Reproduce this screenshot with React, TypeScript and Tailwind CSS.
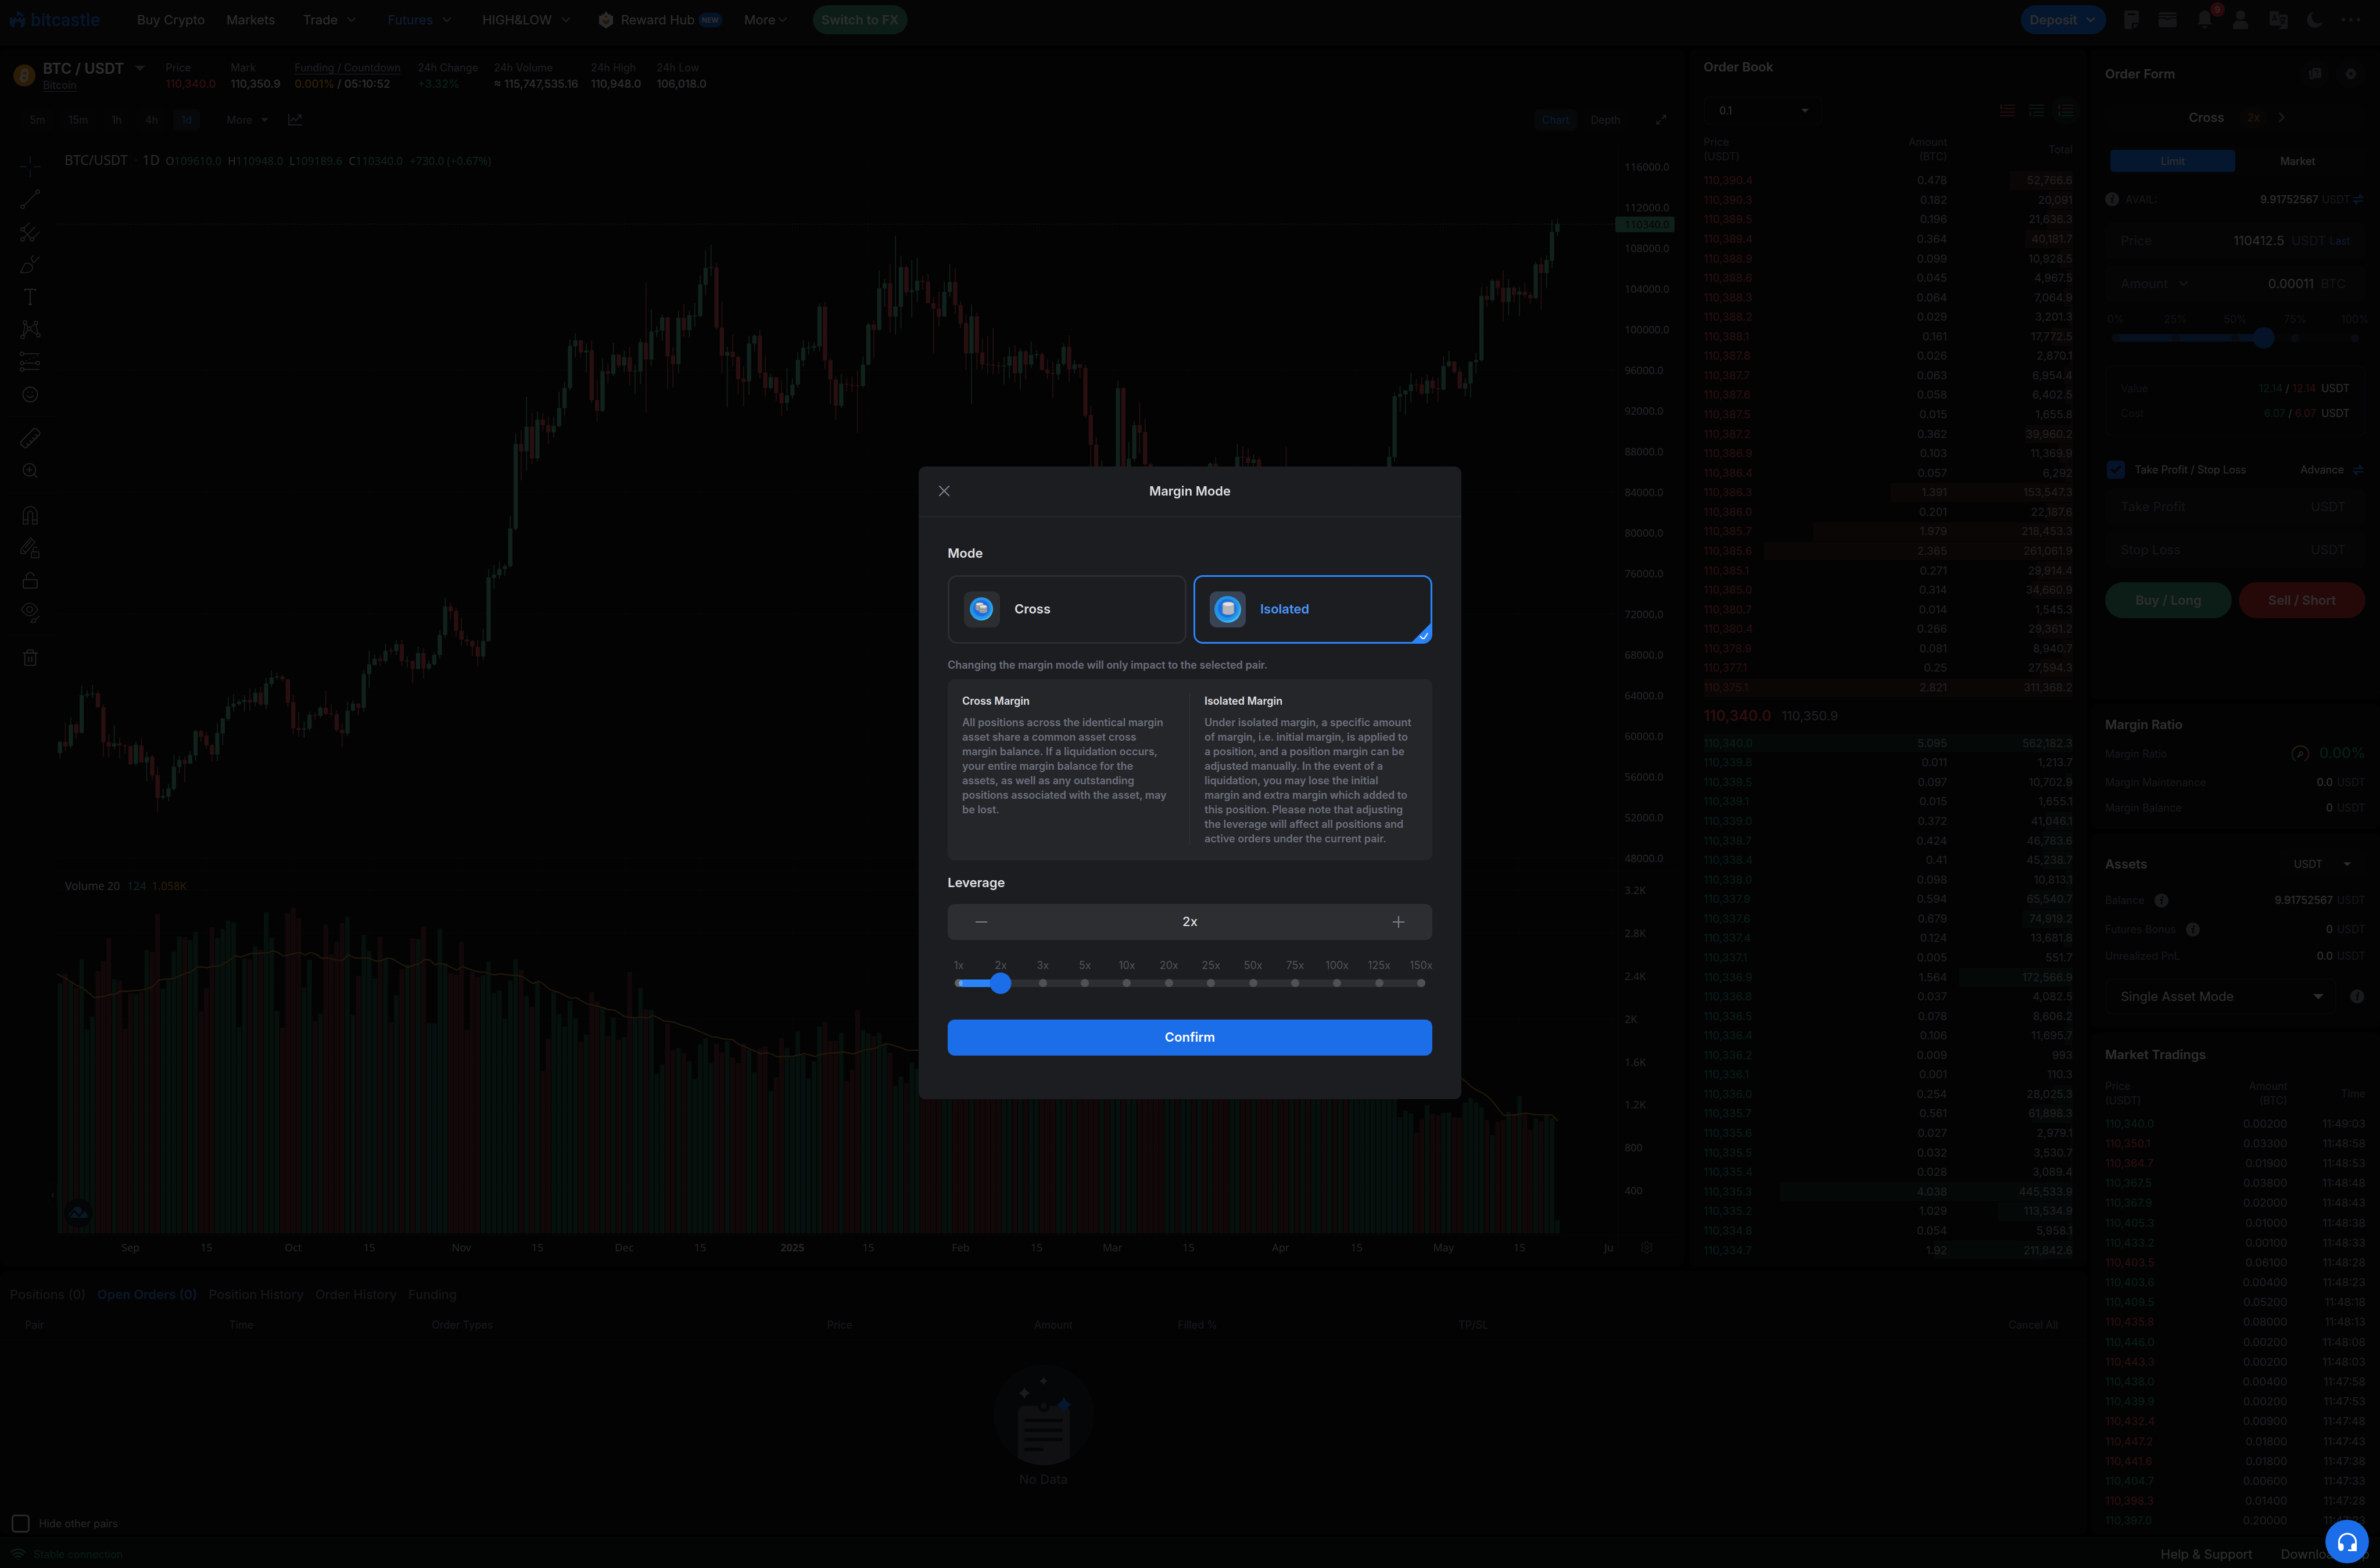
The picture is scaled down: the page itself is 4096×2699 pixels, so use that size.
import React, { useState } from "react";
import {
  ChevronDown,
  ChevronRight,
  Trash2,
  Smile,
  Ruler,
  ZoomIn,
  LockOpen,
  Maximize2,
  Wifi,
  X,
  Minus,
  Plus,
  Check,
  Settings,
} from "lucide-react";

/* ------------------------------------------------------------------ data */

// body top, body bottom, high, low, 1 = up / 0 = down
type Candle = [number, number, number, number, number];

const EARLY: Candle[] = [
  [1376, 1400, 1374, 1412, 1], [1376, 1386, 1334, 1396, 0], [1339, 1385, 1324, 1390, 1], [1339, 1357, 1333, 1369, 0],
  [1276, 1357, 1256, 1357, 1], [1274, 1277, 1266, 1282, 1], [1272, 1274, 1254, 1282, 1], [1272, 1302, 1266, 1303, 0],
  [1302, 1377, 1295, 1408, 0], [1377, 1386, 1360, 1410, 0], [1379, 1386, 1340, 1393, 1], [1379, 1384, 1367, 1413, 0],
  [1384, 1386, 1381, 1402, 0], [1385, 1424, 1384, 1425, 0], [1382, 1423, 1375, 1427, 1], [1384, 1420, 1368, 1421, 0],
  [1409, 1420, 1397, 1460, 1], [1408, 1448, 1403, 1459, 0], [1447, 1496, 1430, 1527, 0], [1492, 1496, 1476, 1500, 1],
  [1476, 1493, 1466, 1503, 1], [1429, 1477, 1404, 1482, 1], [1415, 1430, 1406, 1443, 1], [1415, 1423, 1408, 1462, 0],
  [1404, 1423, 1396, 1423, 1], [1353, 1405, 1350, 1416, 1], [1353, 1365, 1350, 1376, 0], [1363, 1384, 1355, 1391, 0],
  [1383, 1403, 1380, 1418, 0], [1357, 1403, 1336, 1417, 1], [1326, 1358, 1325, 1383, 1], [1300, 1327, 1281, 1331, 1],
  [1294, 1301, 1274, 1311, 1], [1290, 1295, 1285, 1299, 1], [1286, 1291, 1276, 1311, 1], [1286, 1292, 1261, 1309, 0],
  [1271, 1291, 1262, 1300, 1], [1271, 1296, 1259, 1300, 0], [1251, 1296, 1239, 1306, 1], [1238, 1252, 1223, 1259, 1],
  [1236, 1238, 1228, 1243, 1], [1236, 1242, 1232, 1246, 0], [1242, 1292, 1242, 1301, 0], [1291, 1347, 1276, 1359, 0],
  [1346, 1351, 1312, 1365, 0], [1347, 1350, 1332, 1367, 1], [1318, 1348, 1311, 1354, 1], [1318, 1320, 1313, 1330, 0],
  [1303, 1320, 1299, 1325, 1], [1303, 1316, 1267, 1318, 0], [1315, 1317, 1295, 1323, 0], [1317, 1351, 1309, 1355, 0],
  [1350, 1358, 1336, 1388, 0], [1309, 1358, 1290, 1363, 1], [1294, 1309, 1287, 1311, 1], [1294, 1303, 1293, 1319, 0],
  [1231, 1303, 1222, 1311, 1], [1210, 1231, 1181, 1260, 1], [1198, 1211, 1190, 1214, 1], [1198, 1203, 1191, 1214, 0],
  [1181, 1203, 1166, 1208, 1], [1180, 1182, 1174, 1190, 0], [1167, 1182, 1159, 1189, 1], [1167, 1203, 1157, 1214, 0],
  [1202, 1203, 1193, 1217, 1], [1203, 1220, 1202, 1250, 0], [1186, 1220, 1172, 1221, 1], [1186, 1219, 1175, 1241, 0],
  [1209, 1219, 1202, 1223, 1], [1190, 1210, 1184, 1213, 1], [1147, 1190, 1137, 1198, 1], [1086, 1147, 1067, 1153, 1],
  [1086, 1096, 1078, 1114, 0], [1095, 1138, 1088, 1152, 0], [1138, 1157, 1110, 1170, 0], [1157, 1161, 1148, 1170, 0],
  [1160, 1172, 1158, 1192, 0], [1172, 1193, 1157, 1215, 0], [1160, 1193, 1134, 1201, 1], [1024, 1161, 1006, 1161, 1],
  [1018, 1025, 997, 1048, 1], [1006, 1019, 990, 1027, 1], [1000, 1006, 995, 1021, 1], [919, 1000, 893, 1003, 1],
  [738, 920, 716, 924, 1], [738, 754, 709, 816, 0], [701, 754, 637, 795, 1], [701, 769, 671, 781, 0],
  [686, 769, 669, 775, 1], [686, 698, 672, 711, 0], [698, 713, 679, 739, 0], [699, 713, 680, 724, 1],
  [661, 700, 626, 702, 1], [618, 661, 605, 677, 1], [528, 618, 514, 623, 1], [516, 529, 501, 553, 1],
  [516, 542, 515, 553, 0], [538, 542, 523, 585, 1], [537, 644, 516, 650, 0], [644, 667, 601, 690, 0],
  [582, 667, 554, 670, 1], [582, 588, 565, 608, 0], [547, 588, 522, 592, 1], [547, 570, 545, 576, 0],
  [552, 570, 538, 583, 1], [552, 583, 530, 612, 0], [581, 583, 568, 631, 1], [520, 583, 513, 610, 1],
  [521, 557, 393, 671, 0], [497, 557, 450, 571, 1], [495, 498, 485, 509, 1], [467, 495, 461, 517, 1],
  [467, 550, 466, 620, 0], [549, 567, 531, 617, 0], [468, 567, 452, 587, 1], [468, 494, 438, 508, 0],
  [462, 494, 452, 510, 1], [463, 464, 436, 487, 1], [396, 464, 377, 466, 1], [361, 397, 323, 420, 1],
  [359, 361, 311, 378, 1], [360, 489, 350, 493, 0], [489, 549, 433, 587, 0], [541, 549, 530, 660, 1],
  [541, 552, 504, 571, 0], [552, 599, 549, 632, 0], [598, 605, 571, 657, 0], [523, 604, 506, 633, 1],
  [506, 523, 503, 540, 1], [506, 586, 494, 597, 0], [585, 618, 550, 636, 0], [595, 618, 587, 622, 1],
  [595, 629, 594, 647, 0], [629, 651, 601, 678, 0], [634, 650, 575, 668, 1], [611, 634, 598, 641, 1],
  [558, 611, 541, 617, 1], [532, 559, 515, 572, 1], [531, 532, 519, 546, 1], [528, 532, 520, 540, 1],
  [444, 529, 437, 540, 1], [444, 559, 434, 578, 0], [559, 600, 554, 653, 0], [600, 656, 593, 686, 0],
  [609, 656, 588, 661, 1], [609, 611, 597, 625, 0], [611, 613, 593, 627, 0], [612, 613, 581, 714, 0],
];

const LATE: Candle[] = [
  [723, 790, 697, 795, 1], [596, 723, 590, 725, 1], [596, 613, 584, 700, 0], [482, 613, 426, 616, 1],
  [466, 482, 452, 540, 1], [466, 571, 405, 624, 0], [539, 571, 316, 627, 1], [415, 540, 379, 608, 1],
  [415, 494, 409, 505, 0], [488, 494, 393, 574, 1], [458, 489, 386, 525, 1], [458, 462, 442, 486, 0],
  [461, 529, 436, 529, 0], [529, 546, 509, 687, 0], [546, 572, 492, 603, 0], [493, 571, 460, 571, 1],
  [462, 493, 406, 508, 1], [462, 535, 419, 562, 0], [535, 593, 523, 606, 0], [592, 687, 566, 738, 0],
  [570, 687, 533, 848, 1], [570, 685, 558, 738, 0], [684, 722, 640, 738, 0], [721, 723, 633, 752, 0],
  [723, 726, 607, 753, 0], [725, 727, 713, 752, 0], [725, 726, 698, 785, 1], [696, 726, 666, 766, 1],
  [696, 750, 661, 778, 0], [681, 749, 673, 801, 1], [681, 722, 675, 769, 0], [692, 722, 650, 733, 1],
  [690, 692, 678, 703, 1], [690, 739, 685, 741, 0], [738, 750, 706, 768, 0], [749, 753, 714, 827, 0],
  [720, 753, 706, 771, 1], [667, 720, 655, 726, 1], [667, 738, 630, 777, 0], [722, 737, 708, 750, 1],
  [722, 733, 720, 763, 0], [733, 884, 723, 890, 0], [882, 976, 851, 1060, 0], [975, 1070, 951, 1120, 0],
  [1068, 1130, 1025, 1180, 1], [1080, 1140, 1070, 1190, 0], [1100, 1140, 1080, 1180, 1], [797, 1110, 773, 1120, 1],
  [797, 1080, 793, 1100, 0], [1020, 1080, 967, 1100, 1], [914, 1020, 902, 1030, 1], [914, 937, 842, 1002, 0],
  [935, 1037, 894, 1060, 0], [1037, 1150, 1033, 1180, 0], [1130, 1200, 1100, 1240, 0], [1180, 1220, 1130, 1250, 0],
  [1140, 1220, 1120, 1240, 1], [1120, 1160, 1100, 1180, 1], [1120, 1160, 1100, 1190, 0], [1110, 1160, 1090, 1180, 1],
  [1080, 1110, 1070, 1130, 1], [1080, 1120, 1070, 1140, 0], [1060, 1120, 1050, 1130, 1], [1060, 1100, 1052, 1120, 0],
  [1035, 1100, 1030, 1110, 1], [1035, 1110, 1013, 1120, 0], [1090, 1120, 1070, 1140, 0], [1090, 1130, 1080, 1140, 0],
  [1060, 1120, 1052, 1130, 1], [1013, 1070, 972, 1080, 1], [1013, 1016, 981, 1070, 0], [1016, 1033, 987, 1070, 0],
  [1022, 1033, 1006, 1060, 1], [1022, 1120, 1013, 1130, 0], [1110, 1160, 1100, 1170, 0], [1140, 1170, 1120, 1190, 0],
  [1110, 1170, 1090, 1180, 1], [1110, 1150, 1090, 1170, 0], [1100, 1180, 981, 1190, 0], [1120, 1180, 1100, 1200, 1],
  [1120, 1170, 1110, 1200, 0], [1130, 1170, 1110, 1190, 1], [1130, 1220, 1120, 1240, 0], [1200, 1240, 1170, 1280, 1],
  [1100, 1220, 1090, 1240, 1], [1100, 1160, 1090, 1200, 0], [1110, 1160, 1100, 1180, 1], [1110, 1150, 1080, 1160, 0],
  [1090, 1130, 1080, 1150, 1], [1090, 1110, 1080, 1130, 0], [1080, 1110, 1070, 1130, 1], [1080, 1110, 1070, 1120, 1],
  [1080, 1110, 1070, 1120, 1], [1080, 1110, 1070, 1120, 1], [1070, 1100, 1060, 1110, 1], [1065, 1100, 1060, 1110, 1],
  [1060, 1100, 1055, 1110, 1], [1013, 1080, 981, 1090, 1], [822, 1014, 810, 1029, 1], [815, 824, 790, 871, 1],
  [804, 816, 804, 881, 1], [785, 806, 748, 842, 1], [785, 786, 767, 808, 0], [785, 815, 763, 820, 0],
  [773, 814, 755, 845, 1], [773, 797, 761, 813, 0], [797, 801, 765, 841, 0], [727, 801, 696, 804, 1],
  [713, 727, 680, 731, 1], [713, 746, 713, 751, 0], [745, 798, 731, 799, 0], [781, 798, 766, 822, 1],
  [714, 782, 711, 826, 1], [708, 715, 686, 751, 1], [506, 709, 478, 713, 1], [506, 518, 475, 541, 0],
  [458, 519, 452, 525, 1], [458, 480, 454, 504, 0], [480, 525, 425, 585, 0], [480, 525, 453, 567, 1],
  [480, 502, 473, 529, 0], [492, 502, 478, 569, 1], [492, 503, 465, 515, 0], [503, 513, 494, 530, 0],
  [406, 513, 397, 515, 1], [406, 434, 384, 548, 0], [393, 434, 378, 480, 1], [304, 395, 265, 418, 1],
  [279, 304, 261, 317, 1],
];

const VOL_EARLY = [
  481, 444, 475, 499, 389, 659, 610, 434, 395, 308, 465, 470, 657, 520, 523, 514, 352, 361, 214, 502, 467, 359, 301,
  303, 314, 282, 589, 500, 265, 306, 272, 239, 246, 650, 385, 389, 340, 352, 207, 305, 587, 652, 210, 190, 230, 497,
  390, 626, 598, 254, 369, 321, 249, 225, 602, 453, 294, 357, 462, 301, 384, 631, 527, 427, 408, 308, 310, 263, 634,
  636, 270, 403, 443, 448, 321, 660, 437, 458, 449, 397, 519, 509, 617, 470, 389, 430, 530, 571, 475, 820, 695, 514,
  599, 648, 549, 617, 707, 678, 516, 551, 575, 685, 613, 699, 688, 438, 612, 498, 582, 584, 831, 794, 636, 740, 730,
  751, 782, 850, 716, 692, 789, 714, 747, 702, 767, 789, 713, 737, 824, 733, 725, 896, 843, 693, 730, 760, 667, 757,
  848, 782, 648, 631, 702, 702, 672, 858, 814, 585, 660, 674, 685, 671, 714, 749, 876, 840, 866, 787, 810,
];
const VOL_LATE = [
  1033, 1012, 1021, 1087, 1042, 993, 1022, 1028, 1019, 1018, 1034, 1036, 984, 968, 984, 1001, 1044, 1095, 1050, 1044,
  1016, 1021, 962, 1022, 1077, 1038, 1048, 1026, 1036, 1384,
];

const AVG_EARLY =
  "97,445 112,462 131,490 140,498 149,514 160,536 178,531 187,524 196,523 205,511 214,512 240,507 251,502 260,494 270,469 280,465 290,464 298,460 317,441 325,437 335,418 343,418 353,421 362,415 371,415 380,406 390,393 400,374 408,380 427,366 455,364 463,356 473,362 482,376 509,362 519,372 528,362 538,369 547,385 556,383 573,391 583,392 592,371 602,382 611,384 628,383 638,395 648,395 657,385 666,385 684,409 694,420 704,411 712,407 722,389 731,391 740,409 749,405 758,409 777,430 787,416 797,426 814,437 823,438 841,449 850,444 869,450 879,450 889,456 906,482 916,473 924,483 934,504 952,518 971,539 980,536 998,560 1007,564 1026,575 1035,583 1045,584 1063,610 1082,614 1091,611 1100,616 1110,605 1119,613 1129,626 1146,631 1165,647 1174,651 1193,670 1211,687 1219,688 1229,695 1246,698 1257,717 1266,724 1294,753 1303,748 1312,754 1322,764 1349,762 1368,752 1386,763 1395,756 1413,749 1424,749 1433,745 1451,753 1469,739 1478,735 1487,733 1506,714 1515,717 1533,730 1543,739 1561,739";
const AVG_LATE =
  "1105,898 1125,928 1136,941 1150,952 1160,964 1170,982 1191,1027 1213,1026 1235,1020 1256,1025 1289,1026 1301,1046";

const TIME_TICKS: [number, string][] = [
  [13, "Sep"], [27, "15"], [43, "Oct"], [57, "15"], [74, "Nov"], [88, "15"], [104, "Dec"], [118, "15"], [135, "2025"],
  [149, "15"], [166, "Feb"], [180, "15"], [194, "Mar"], [208, "15"], [225, "Apr"], [239, "15"], [255, "May"], [269, "15"],
];
const VOL_TICKS = ["400", "800", "1.2K", "1.6K", "2K", "2.4K", "2.8K", "3.2K"];

const ASKS: [string, string, string][] = [
  ["110,390.4", "0.478", "52,766.6"], ["110,390.3", "0.182", "20,091"], ["110,389.5", "0.196", "21,636.3"],
  ["110,389.4", "0.364", "40,181.7"], ["110,388.9", "0.099", "10,928.5"], ["110,388.6", "0.045", "4,967.5"],
  ["110,388.3", "0.064", "7,064.9"], ["110,388.2", "0.029", "3,201.3"], ["110,388.1", "0.161", "17,772.5"],
  ["110,387.8", "0.026", "2,870.1"], ["110,387.7", "0.063", "6,954.4"], ["110,387.6", "0.058", "6,402.5"],
  ["110,387.5", "0.015", "1,655.8"], ["110,387.2", "0.362", "39,960.2"], ["110,386.9", "0.103", "11,369.9"],
  ["110,386.4", "0.057", "6,292"], ["110,386.3", "1.391", "153,547.3"], ["110,386.0", "0.201", "22,187.6"],
  ["110,385.7", "1.979", "218,453.3"], ["110,385.6", "2.365", "261,061.9"], ["110,385.1", "0.271", "29,914.4"],
  ["110,385.0", "0.314", "34,660.9"], ["110,380.7", "0.014", "1,545.3"], ["110,380.4", "0.266", "29,361.2"],
  ["110,378.9", "0.081", "8,940.7"], ["110,377.1", "0.25", "27,594.3"], ["110,375.1", "2.821", "311,368.2"],
];
const BIDS: [string, string, string][] = [
  ["110,340.0", "5.095", "562,182.3"], ["110,339.8", "0.011", "1,213.7"], ["110,339.5", "0.097", "10,702.9"],
  ["110,339.1", "0.015", "1,655.1"], ["110,339.0", "0.372", "41,046.1"], ["110,338.7", "0.424", "46,783.6"],
  ["110,338.4", "0.41", "45,238.7"], ["110,338.0", "0.098", "10,813.1"], ["110,337.9", "0.594", "65,540.7"],
  ["110,337.6", "0.679", "74,919.2"], ["110,337.4", "0.124", "13,681.8"], ["110,337.1", "0.005", "551.7"],
  ["110,336.9", "1.564", "172,566.9"], ["110,336.8", "0.037", "4,082.5"], ["110,336.5", "0.078", "8,606.2"],
  ["110,336.4", "0.106", "11,695.7"], ["110,336.2", "0.009", "993"], ["110,336.1", "0.001", "110.3"],
  ["110,336.0", "0.254", "28,025.3"], ["110,335.7", "0.561", "61,898.3"], ["110,335.6", "0.027", "2,979.1"],
  ["110,335.5", "0.032", "3,530.7"], ["110,335.4", "0.028", "3,089.4"], ["110,335.3", "4.038", "445,533.9"],
  ["110,335.2", "1.029", "113,534.9"], ["110,334.8", "0.054", "5,958.1"], ["110,334.7", "1.92", "211,842.6"],
];
const TRADES: [string, string, string, boolean][] = [
  ["110,340.0", "0.00200", "11:49:03", true], ["110,350.1", "0.03300", "11:48:58", false],
  ["110,364.7", "0.01900", "11:48:53", false], ["110,367.5", "0.03800", "11:48:48", true],
  ["110,367.9", "0.02000", "11:48:43", true], ["110,405.3", "0.01000", "11:48:38", true],
  ["110,433.2", "0.00100", "11:48:33", true], ["110,403.5", "0.06100", "11:48:28", false],
  ["110,403.6", "0.00400", "11:48:23", true], ["110,409.5", "0.05200", "11:48:18", true],
  ["110,435.8", "0.08000", "11:48:13", false], ["110,446.0", "0.00200", "11:48:08", true],
  ["110,443.3", "0.00200", "11:48:03", false], ["110,438.0", "0.00400", "11:47:58", true],
  ["110,439.9", "0.00200", "11:47:53", true], ["110,432.4", "0.00900", "11:47:48", false],
  ["110,447.2", "0.01800", "11:47:43", false], ["110,441.6", "0.01800", "11:47:38", false],
  ["110,404.7", "0.00600", "11:47:33", true], ["110,398.3", "0.01400", "11:47:28", false],
  ["110,397.0", "0.20000", "11:47:23", true],
];

/* ----------------------------------------------------------------- icons */

function Caret({ className }: { className?: string }) {
  return (
    <svg viewBox="0 0 12 6" className={className ?? "h-[7px] w-[13px]"} fill="currentColor" aria-hidden="true">
      <path d="M0 0h12L6 6z" />
    </svg>
  );
}

function Info() {
  return (
    <svg viewBox="0 0 24 24" className="size-6 shrink-0 text-[#7b808a]" aria-hidden="true">
      <circle cx="12" cy="12" r="12" fill="currentColor" />
      <circle cx="13.6" cy="6.6" r="1.7" fill="#101114" />
      <path d="M9 10.5h4.2l-1.6 6.3c-.2.9.5 1 1.7.2" fill="none" stroke="#101114" strokeWidth="2.2" />
    </svg>
  );
}

function Swap() {
  return (
    <svg viewBox="0 0 19 18" className="h-[18px] w-[19px] shrink-0 text-[#2a7af0]" fill="none" stroke="currentColor" strokeWidth="2" aria-hidden="true">
      <path d="M1 6h16l-5-5v5M18 12H2l5 5v-5" />
    </svg>
  );
}

function BookIcon({ kind }: { kind: "asks" | "bids" | "both" }) {
  const top = kind === "bids" ? "#2a8567" : "#b04144";
  const bottom = kind === "asks" ? "#b04144" : "#2a8567";
  return (
    <svg viewBox="0 0 26 22" className="h-[22px] w-[26px]" strokeWidth="1.8" fill="none" aria-hidden="true">
      {kind !== "bids" && <path d="M2 1v8" stroke={top} strokeWidth="3" />}
      {kind !== "asks" && <path d="M2 13v8" stroke={bottom} strokeWidth="3" />}
      <path d={kind === "bids" ? "M0 2h26M0 8h26" : "M7 2h19M7 8h19"} stroke={top} />
      <path d={kind === "asks" ? "M0 14h26M0 20h26" : "M7 14h19M7 20h19"} stroke={bottom} />
    </svg>
  );
}

function Logo() {
  return (
    <a href="#home" className="flex w-[157px] items-center gap-[9px] text-[#2369d2]" aria-label="bitcastle home">
      <svg viewBox="0 0 27 30" className="h-[30px] w-[27px] shrink-0" fill="currentColor" aria-hidden="true">
        <path d="M12 0c7 2 11 5 12 9h-4l-2-2h-4v2h-2z" />
        <path d="M0 11h4v3h3v-3h4v3h4v-3h4v3h3v-3h4v10c0 3-2 6-7 8v-7a6 6 0 0 0-11 0v7c-5-2-8-5-8-8z" />
      </svg>
      <span className="font-['Roboto',sans-serif] text-[31px] leading-none font-medium">bitcastle</span>
    </a>
  );
}

function star(x: number, y: number, r: number) {
  const q = r * 0.25;
  return `M${x} ${y - r}Q${x + q} ${y - q} ${x + r} ${y}Q${x + q} ${y + q} ${x} ${y + r}Q${x - q} ${y + q} ${x - r} ${y}Q${x - q} ${y - q} ${x} ${y - r}`;
}

function EmptyArt() {
  return (
    <svg viewBox="0 0 173 173" className="size-[173px]" aria-hidden="true">
      <clipPath id="disc">
        <circle cx="86.5" cy="86.5" r="86.5" />
      </clipPath>
      <circle cx="86.5" cy="86.5" r="86.5" fill="#1d2127" />
      <g clipPath="url(#disc)">
        <rect x="42" y="71" width="89" height="120" rx="10" fill="#505359" />
        <circle cx="86.5" cy="72" r="10" fill="#1d2127" />
      </g>
      <circle cx="86.5" cy="71" r="5" fill="#505359" />
      <g fill="#1d2127">
        <rect x="53" y="93" width="66" height="6" rx="2" />
        <rect x="53" y="110" width="66" height="6" rx="2" />
        <rect x="53" y="126" width="66" height="6" rx="2" />
        <rect x="53" y="143" width="33" height="6" rx="2" />
      </g>
      <path d={star(86, 28, 7)} fill="#85888e" />
      <path d={star(53, 49, 10)} fill="#85888e" />
      <path d={star(121, 69, 14)} fill="#1b6de8" />
    </svg>
  );
}

function CoinArt({ variant }: { variant: "cross" | "isolated" }) {
  const big = variant === "isolated";
  return (
    <svg viewBox="0 0 62 62" className="size-[62px]" aria-hidden="true">
      <defs>
        <linearGradient id={`rim-${variant}`} x1="0" y1="0" x2="1" y2="1">
          <stop offset="0" stopColor="#1f7fd6" />
          <stop offset="0.6" stopColor="#2aa6f0" />
          <stop offset="0.84" stopColor="#3fb8f8" />
          <stop offset="0.88" stopColor="#d8eefb" />
          <stop offset="1" stopColor="#2b9be8" />
        </linearGradient>
      </defs>
      <circle cx={big ? 31 : 30} cy={big ? 31 : 30} r={big ? 23 : 20} fill={`url(#rim-${variant})`} />
      <circle cx="30" cy="29" r={big ? 21 : 18} fill="#2394e4" />
      <circle cx="30" cy="29" r={big ? 16 : 14} fill="#1a6fe6" />
      {big
        ? [34, 30, 26, 22].map((y) => (
            <g key={y} stroke="#8b8d93" strokeWidth="1">
              <path d={`M22 ${y}v2a10 4 0 0 0 20 0v-2`} fill="#d9dadd" />
              <ellipse cx="32" cy={y} rx="10" ry="4" fill="#e0e1e4" />
            </g>
          ))
        : [
            [27, 28], [27, 25], [27, 22], [33, 32], [33, 29], [33, 26],
          ].map(([x, y]) => (
            <g key={`${x}-${y}`} stroke="#77797f" strokeWidth="1">
              <path d={`M${x - 7} ${y}v2a7 3 0 0 0 14 0v-2`} fill="#d0d1d5" />
              <ellipse cx={x} cy={y} rx="7" ry="3" fill="#e2e3e6" />
            </g>
          ))}
    </svg>
  );
}

/* ---------------------------------------------------------------- header */

function NavLink({ label, menu, active, className }: { label: string; menu?: boolean; active?: boolean; className?: string }) {
  return (
    <a href={`#${label}`} className={`flex items-center gap-[12px] ${active ? "text-[#4a96f8]" : ""} ${className ?? ""}`}>
      {label}
      {menu && <ChevronDown className="size-6 text-[#85888e]" strokeWidth={2.5} />}
    </a>
  );
}

function Header() {
  return (
    <header className="border-b-2 border-[#24262a] bg-[#191a1e] pb-2 text-[22px] text-[#e6e6e6]">
      <nav className="flex h-[68px] items-center pr-[34px] pl-[17px]" aria-label="Main">
        <Logo />
        <span className="mr-[37px] ml-[24px] h-12 w-px bg-[#24262a]" />
        <NavLink label="Buy Crypto" />
        <NavLink label="Markets" className="ml-[37px]" />
        <NavLink label="Trade" menu className="ml-[48px]" />
        <NavLink label="Futures" menu active className="ml-[50px]" />
        <NavLink label="HIGH&LOW" menu className="ml-[49px]" />
        <a href="#rewards" className="ml-[45px] flex items-center gap-[6px]">
          <svg viewBox="0 0 24 30" className="mr-2 h-[30px] w-6" aria-hidden="true">
            <path d="M0 8h4l1-3 3 1 4-6 4 6 3-1 1 3h4v14l-12 8-12-8z" fill="#d4d6da" />
            <path d="M6 14l6 3 6-3v5l-6 5-6-5zM8 8h8l-4 4z" fill="#b07a26" />
          </svg>
          Reward Hub
          <span className="rounded-full bg-[#1b5fce] px-[6px] text-[12px] leading-[25px] font-bold">NEW</span>
        </a>
        <a href="#more" className="ml-[38px] flex items-center">
          More <ChevronDown className="size-6 text-[#85888e]" strokeWidth={2.5} />
        </a>
        <button className="ml-[40px] h-[50px] rounded-full bg-[#37906f] px-[15px] font-semibold">Switch to FX</button>
        <div className="ml-auto flex items-center text-[#6d717a]">
          <button className="mr-[31px] flex h-[50px] items-center gap-[11px] rounded-full bg-[#1b6de8] px-[15px] font-semibold text-[#e6e6e6]">
            Deposit <ChevronDown className="size-6" strokeWidth={3} />
          </button>
          <button aria-label="Orders" className="mr-[34px]">
            <svg viewBox="0 0 25 32" className="h-8 w-[25px]" fill="currentColor" aria-hidden="true">
              <path d="M3 0h19a3 3 0 0 1 3 3v18h-9a3 3 0 0 0-3 3v8H3a3 3 0 0 1-3-3V3a3 3 0 0 1 3-3zm3 5v3h13V5zM16 24h9l-9 8z" fillRule="evenodd" />
            </svg>
          </button>
          <button aria-label="Wallet" className="mr-[17px]">
            <svg viewBox="0 0 31 26" className="h-[26px] w-[31px]" fill="currentColor" aria-hidden="true">
              <path d="M4 0h23a4 4 0 0 1 4 4H0a4 4 0 0 1 4-4zM0 6h31v3H19a4 3 0 0 1-7 0H0zM0 11h10a6 4 0 0 0 11 0h10v11a4 4 0 0 1-4 4H4a4 4 0 0 1-4-4z" />
            </svg>
          </button>
          <span className="mr-[18px] h-12 w-px bg-[#24262a]" />
          <button aria-label="Notifications" className="relative mr-[36px]">
            <svg viewBox="0 0 25 32" className="h-8 w-[25px]" fill="currentColor" aria-hidden="true">
              <path d="M12.5 0A9.5 10 0 0 1 22 10v10l3 3v1H0v-1l3-3V10A9.5 10 0 0 1 12.5 0zM7 27h11l-5.500 5z" />
            </svg>
            <span className="absolute -top-[14px] -right-[22px] size-[25px] rounded-full bg-[#d9363b] text-center text-[15px] leading-[25px] text-[#e6e6e6]">9</span>
          </button>
          <button aria-label="Account" className="mr-[20px]">
            <svg viewBox="0 0 26 32" className="h-8 w-[26px]" fill="currentColor" aria-hidden="true">
              <circle cx="13" cy="8" r="8" />
              <path d="M5 18h16l5 6v8H0v-8z" />
            </svg>
          </button>
          <span className="mr-[16px] h-12 w-px bg-[#24262a]" />
          <button aria-label="Language" className="mr-[33px]">
            <svg viewBox="0 0 31 31" className="size-[31px]" aria-hidden="true">
              <path d="M3 0h12l5 25H3a3 3 0 0 1-3-3V3a3 3 0 0 1 3-3z" fill="currentColor" />
              <path d="M17 6h11a3 3 0 0 1 3 3v19a3 3 0 0 1-3 3H15l6-5z" fill="currentColor" />
              <path d="M5 17l3.5-10L12 17M6 14h5M18 12h10M23 9v3M19 22c4-2 6-5 7-10M20 15c1 3 3 5 7 7" fill="none" stroke="#191a1e" strokeWidth="1.8" />
            </svg>
          </button>
          <button aria-label="Theme" className="mr-[32px]">
            <svg viewBox="0 0 28 28" className="size-7" fill="currentColor" aria-hidden="true">
              <path d="M12 0a11 11 0 0 0 16 17A14 14 0 1 1 12 0z" />
            </svg>
          </button>
          <button aria-label="More options">
            <svg viewBox="0 0 32 6" className="h-[6px] w-8" fill="currentColor" aria-hidden="true">
              <circle cx="3" cy="3" r="3" />
              <circle cx="16" cy="3" r="3" />
              <circle cx="29" cy="3" r="3" />
            </svg>
          </button>
        </div>
      </nav>
    </header>
  );
}

/* ----------------------------------------------------------------- chart */

const STATS: [string, string, string, string][] = [
  ["Price", "110,340.0", "text-[#f0494e]", "w-[112px]"],
  ["Mark", "110,350.9", "text-[#e6e6e6]", "w-[110px]"],
  ["Funding / Countdown", "", "text-[#e6e6e6]", "w-[212px]"],
  ["24h Change", "+3.32%", "text-[#2f9c78]", "w-[131px]"],
  ["24h Volume", "≈ 115,747,535.16", "text-[#e6e6e6]", "w-[167px]"],
  ["24h High", "110,948.0", "text-[#e6e6e6]", "w-[113px]"],
  ["24h Low", "106,018.0", "text-[#e6e6e6]", "w-[100px]"],
];

function PairBar() {
  return (
    <div className="flex h-[98px] items-center pb-[6px] pl-[23px] text-[18px] leading-[25px]">
      <svg viewBox="0 0 38 38" className="size-[38px]" aria-hidden="true">
        <circle cx="19" cy="19" r="19" fill="#e08a1c" />
        <g fill="none" stroke="#e6e6e6" strokeWidth="3" transform="rotate(12 19 19)">
          <path d="M14 11h6a4 4 0 0 1 0 8h-6zM14 19h7a4 4 0 0 1 0 8h-7zM15 19v8M12 11h4M12 27h4M17 7v4M21 7v4M17 27v4M21 27v4" />
        </g>
      </svg>
      <div className="ml-[13px] w-[211px]">
        <button className="flex items-center gap-[18px] text-[25px] leading-[32px] font-semibold text-[#e6e6e6]">
          BTC / USDT <Caret className="h-[13px] w-[18px] text-[#85888e]" />
        </button>
        <a href="#bitcoin" className="block text-[#9699a0] underline underline-offset-4">Bitcoin</a>
      </div>
      {STATS.map(([label, value, tone, width]) => (
        <dl key={label} className={width}>
          <dt className={`whitespace-nowrap text-[#9699a0] ${label.startsWith("Funding") ? "underline underline-offset-4" : ""}`}>{label}</dt>
          <dd className={`pt-[3px] text-[19px] font-medium whitespace-nowrap ${tone}`}>
            {label.startsWith("Funding") ? (
              <>
                <span className="text-[#e0a024]">0.001%</span> / 05:10:52
              </>
            ) : (
              value
            )}
          </dd>
        </dl>
      ))}
    </div>
  );
}

function IntervalBar() {
  return (
    <div className="flex h-[50px] items-center gap-3 pr-[31px] pb-[2px] pl-[37px] text-[18px] text-[#868b95]">
      {["5m", "15m", "1h", "4h"].map((t) => (
        <button key={t} className="h-[37px] rounded-lg bg-[#17181b] px-[14px]">{t}</button>
      ))}
      <button className="h-[37px] rounded-lg bg-[#212833] px-[14px] text-[#3b8cf6]">1d</button>
      <button className="ml-[34px] flex items-center gap-[15px]">
        More <Caret />
      </button>
      <button aria-label="Indicators" className="ml-[22px]">
        <svg viewBox="0 0 24 20" className="h-5 w-6" fill="none" stroke="currentColor" strokeWidth="2" aria-hidden="true">
          <path d="M1 0v19h23M4 13l5-6 4 5 8-9M16 2h6v6" />
        </svg>
      </button>
      <div className="ml-auto flex items-center">
        <button className="h-[37px] rounded-lg bg-[#212833] px-[13px] text-[#3b8cf6]">Chart</button>
        <button className="ml-3 h-[37px] rounded-lg bg-[#17181b] px-[12px]">Depth</button>
        <button aria-label="Expand chart" className="ml-[48px] text-[#a3a6ad]">
          <Maximize2 className="size-5" />
        </button>
      </div>
    </div>
  );
}

function ToolButton({ label, children }: { label: string; children: React.ReactNode }) {
  return (
    <button aria-label={label} className="grid h-14 w-full place-items-center">
      {children}
    </button>
  );
}

function DrawTools() {
  const p = { viewBox: "0 0 36 36", fill: "none", stroke: "currentColor", strokeWidth: 1.5, className: "size-9", "aria-hidden": true } as const;
  return (
    <div className="flex w-[98px] shrink-0 flex-col pt-[9px] pr-[2px] pl-[8px] text-[#b8babf]" role="toolbar" aria-label="Drawing tools">
      <ToolButton label="Cross">
        <svg {...p} className="size-9 text-[#2c6fdf]">
          <path d="M18 0v12M18 24v12M0 18h12M24 18h12" strokeWidth="2" />
        </svg>
      </ToolButton>
      <ToolButton label="Trend line">
        <svg {...p}>
          <circle cx="5" cy="31" r="3" />
          <circle cx="31" cy="5" r="3" />
          <path d="M7 29L29 7" />
        </svg>
      </ToolButton>
      <ToolButton label="Fork">
        <svg {...p}>
          <circle cx="5" cy="14" r="3" />
          <circle cx="5" cy="31" r="3" />
          <circle cx="21" cy="31" r="3" />
          <path d="M7 29L27 9M7 12L17 2M7 16l12 13M23 29l11-11" />
        </svg>
      </ToolButton>
      <ToolButton label="Brush">
        <svg {...p}>
          <path d="M1 32c4-4 4-9 7-14 5-5 15 0 14 7-1 8-14 8-21 7zM21 11c-2-4 0-7 3-8M34 5l-9 9c-2 2-4-1-3-3" />
        </svg>
      </ToolButton>
      <ToolButton label="Text">
        <svg {...p}>
          <path d="M9 8V5h18v3M18 5v26M15 31h6" strokeWidth="2" />
        </svg>
      </ToolButton>
      <ToolButton label="Patterns">
        <svg {...p}>
          <circle cx="5" cy="31" r="3" />
          <circle cx="9" cy="6" r="3" />
          <circle cx="16" cy="17" r="3" />
          <circle cx="28" cy="7" r="3" />
          <circle cx="32" cy="28" r="3" />
          <path d="M6 28L9 9M10 9l5 6M18 15l8-6M28 10l3 15M18 19l12 8M14 19L7 29" />
        </svg>
      </ToolButton>
      <ToolButton label="Fibonacci">
        <svg {...p}>
          <circle cx="4" cy="4" r="3" />
          <circle cx="4" cy="20" r="3" />
          <circle cx="31" cy="20" r="3" />
          <circle cx="4" cy="31" r="3" />
          <path d="M7 4h27M7 20h21M7 31h27" />
          <path d="M10 16L32 7" strokeDasharray="2 5" />
        </svg>
      </ToolButton>
      <ToolButton label="Icons">
        <Smile className="size-[30px]" strokeWidth={1.5} />
      </ToolButton>
      <hr className="my-[9px] border-[#24262a]" />
      <ToolButton label="Measure">
        <Ruler className="size-10 rotate-90" strokeWidth={1.1} />
      </ToolButton>
      <ToolButton label="Zoom in">
        <ZoomIn className="size-8" strokeWidth={1.3} />
      </ToolButton>
      <hr className="my-[10px] border-[#24262a]" />
      <ToolButton label="Magnet">
        <svg {...p}>
          <path d="M6 33V15a12 12 0 0 1 24 0v18h-8V15a4 4 0 0 0-8 0v18zM6 26h8M22 26h8" />
        </svg>
      </ToolButton>
      <ToolButton label="Stay in drawing mode">
        <svg {...p}>
          <path d="M2 28v-8L19 1l7 7L9 28zM5 21l5 5M9 18l11-13" />
          <rect x="20" y="25" width="13" height="10" rx="1" />
          <path d="M23 25v-5a4 4 0 0 1 7-2M26 29v2" />
        </svg>
      </ToolButton>
      <ToolButton label="Lock drawings">
        <LockOpen className="size-[32px]" strokeWidth={1.3} />
      </ToolButton>
      <ToolButton label="Hide drawings">
        <svg {...p}>
          <path d="M3 12C7 4 13 1 17 1s10 3 14 11c-4 8-10 11-14 11S7 20 3 12z" />
          <circle cx="17" cy="12" r="5" />
          <path d="M19 34c2-2 2-6 5-6s5 2 3 5-6 1-8 1zM28 29l6-6" />
        </svg>
      </ToolButton>
      <hr className="my-[10px] border-[#24262a]" />
      <ToolButton label="Remove drawings">
        <Trash2 className="size-8" strokeWidth={1.4} />
      </ToolButton>
    </div>
  );
}

const S = 0.7778;
const barX = (i: number) => (132.7 + 12.005 * i) * S - 98;
const priceY = (p: number) => (368.75 + (116000 - p) * 0.0225) * S - 250;
const volY = (v: number) => (2729.6 - (v / 400) * 94.97) * S - 250;
const earlyY = (y: number) => (220 + y * 1.0332) * S - 250;
const lateY = (y: number) => (300 + y * 0.7015) * S - 250;
const earlyVolY = (y: number) => (1900 + y * 0.574) * S - 250;
const lateVolY = (y: number) => (1800 + y * 0.6505) * S - 250;

const CANDLES: Candle[] = [
  ...EARLY.map(([a, b, c, d, u]) => [earlyY(a), earlyY(b), earlyY(c), earlyY(d), u] as Candle),
  ...LATE.map(([a, b, c, d, u]) => [lateY(a), lateY(b), lateY(c), lateY(d), u] as Candle),
];

function volumeTop(i: number) {
  if (i < VOL_EARLY.length) return earlyVolY(VOL_EARLY[i]);
  const k = i - (CANDLES.length - VOL_LATE.length);
  if (k >= 0) return lateVolY(VOL_LATE[k]);
  return earlyVolY(780 + ((i * 37) % 90));
}

function shiftPoints(points: string, x0: number, kx: number, fy: (y: number) => number) {
  return points
    .split(" ")
    .map((pt) => {
      const [x, y] = pt.split(",").map(Number);
      return `${((x0 + x * kx) * S - 98).toFixed(1)},${fy(y).toFixed(1)}`;
    })
    .join(" ");
}

function PriceChart() {
  const bottom = volY(0);
  const avg =
    shiftPoints(AVG_EARLY, 0, 1.301, earlyVolY) +
    " 1500,1570 1700,1560 2100,1520 2300,1590 " +
    shiftPoints(AVG_LATE, 2020, 1.097, lateVolY);
  const prices = Array.from({ length: 18 }, (_, k) => 48000 + k * 4000);
  return (
    <svg
      viewBox="0 0 2802 1930"
      className="h-full w-full font-['Trebuchet_MS','Noto_Sans',sans-serif]"
      preserveAspectRatio="xMinYMin meet"
      role="img"
      aria-label="BTC/USDT daily candles with volume"
    >
      <g stroke="#1d1f23" strokeWidth="1">
        {[...TIME_TICKS.map(([i]) => i), 286].map((i) => (
          <path key={i} d={`M${barX(i)} 1V${bottom + 8}`} />
        ))}
        {prices.map((p) => (
          <path key={p} d={`M0 ${priceY(p)}H2687`} />
        ))}
        {VOL_TICKS.map((t, k) => (
          <path key={t} d={`M0 ${volY((k + 1) * 400)}H2687`} />
        ))}
        <path d="M0 1249H2790M0 1876H2790M2687 1V1900" stroke="#222428" />
      </g>
      {CANDLES.map(([top, bot, hi, lo, up], i) => (
        <g key={i} fill={up ? "#56a98d" : "#d04e50"}>
          <rect x={barX(i) - 0.8} y={hi} width="1.6" height={lo - hi} />
          <rect x={barX(i) - 3.6} y={top} width="7.2" height={Math.max(bot - top, 1.5)} />
        </g>
      ))}
      {CANDLES.map((c, i) => (
        <rect key={i} x={barX(i) - 4} y={volumeTop(i)} width="8" height={bottom - volumeTop(i)} fill={c[4] ? "#1f4f40" : "#622c2e"} />
      ))}
      <polyline points={avg} fill="none" stroke="#b87f24" strokeWidth="2" strokeLinejoin="round" />
      <path d={`M0 ${priceY(110340)}H2687`} stroke="#4f9f84" strokeWidth="1.5" strokeDasharray="2 3" />
      <rect x="2682" y={priceY(110340) - 13} width="102" height="27" rx="3" fill="#4a9f82" />

      <g fontSize="18" fill="#b4b7bd">
        {prices.map((p) => (
          <text key={p} x="2698" y={priceY(p) + 7}>{`${p}.0`}</text>
        ))}
        {VOL_TICKS.map((t, k) => (
          <text key={t} x="2698" y={volY((k + 1) * 400) + 7}>{t}</text>
        ))}
        {TIME_TICKS.map(([i, t]) => (
          <text key={i} x={barX(i)} y="1904" textAnchor="middle" fontWeight={t === "2025" ? 700 : 400}>{t}</text>
        ))}
        <text x="2663" y="1904">Ju</text>
        <text x="2698" y={priceY(110340) + 7} fill="#101114">110340.0</text>
      </g>
      <g fontSize="23" fill="#d0d2d6">
        <text x="13" y="34">BTC/USDT</text>
        <text x="133" y="34" fill="#5d6168">·</text>
        <text x="147" y="34">1D</text>
      </g>
      <g fontSize="19" fill="#4fae8d">
        <text x="187" y="34"><tspan fill="#d0d2d6">O</tspan>109610.0</text>
        <text x="294" y="34"><tspan fill="#d0d2d6">H</tspan>110948.0</text>
        <text x="400" y="34"><tspan fill="#d0d2d6">L</tspan>109189.6</text>
        <text x="502" y="34"><tspan fill="#d0d2d6">C</tspan>110340.0</text>
        <text x="607" y="34">+730.0 (+0.67%)</text>
        <text x="14" y="1282" fill="#d0d2d6">Volume 20</text>
        <text x="121" y="1282">124</text>
        <text x="163" y="1282" fill="#d09330">1.058K</text>
      </g>
      <g>
        <circle cx="37" cy="1838" r="25" fill="#141a22" />
        <path d="M20 1846c-1-7 3-10 6-10 1-6 5-9 9-9 5 0 7 3 8 7 6 0 10 5 10 12z" fill="#2f78b8" />
        <path d="M20 1846l10-12 8 9 12-13" fill="none" stroke="#141a22" strokeWidth="3" />
      </g>
    </svg>
  );
}

function ChartPanel() {
  return (
    <section className="flex min-w-0 flex-1 flex-col rounded-xl bg-[#101114]">
      <PairBar />
      <IntervalBar />
      <div className="relative mt-[18px] flex min-h-0 flex-1">
        <DrawTools />
        <div className="min-w-0 flex-1">
          <PriceChart />
        </div>
        <button aria-label="Hide toolbar" className="absolute bottom-[103px] left-[83px] h-10 w-4 rounded-l-lg border border-[#24262a] text-[15px] text-[#a3a6ad]">
          ‹
        </button>
        <button aria-label="Chart settings" className="absolute right-[54px] bottom-[21px] text-[#7b808a]">
          <Settings className="size-6" strokeWidth={1.3} />
        </button>
      </div>
    </section>
  );
}

/* ------------------------------------------------------------ order book */

function toNumber(s: string) {
  return Number(s.replace(/,/g, ""));
}

function BookRows({ rows, side }: { rows: [string, string, string][]; side: "ask" | "bid" }) {
  const max = Math.max(...rows.map((r) => toNumber(r[2])));
  const fill = side === "ask" ? "#34201e" : "#172e29";
  return (
    <tbody>
      {rows.map(([price, amount, total]) => {
        const share = (toNumber(total) / max) * 100;
        return (
          <tr key={price} style={{ backgroundImage: `linear-gradient(to left, ${fill} ${share}%, transparent ${share}%)` }}>
            <td className={side === "ask" ? "text-[#d94c50]" : "text-[#2f9c78]"}>{price}</td>
            <td className="text-right">{amount}</td>
            <td className="text-right">{total}</td>
          </tr>
        );
      })}
    </tbody>
  );
}

function BookCols() {
  return (
    <colgroup>
      <col className="w-[36%]" />
      <col className="w-[30%]" />
      <col />
    </colgroup>
  );
}

function OrderBook() {
  return (
    <section className="flex w-[685px] shrink-0 flex-col rounded-xl bg-[#101114] px-[25px] pb-[10px] text-[19px] leading-[25px] text-[#a3a6ad]">
      <h2 className="h-[81px] pt-[17px] text-[22px] leading-[28px] font-semibold text-[#e6e6e6]">Order Book</h2>
      <div className="flex items-center">
        <div className="relative flex w-[205px] items-center">
          <select aria-label="Price step" className="h-[50px] w-full appearance-none rounded-xl border-2 border-[#24262a] pl-[25px] text-[18px] text-[#e6e6e6]">
            <option>0.1</option>
          </select>
          <Caret className="pointer-events-none absolute right-[24px] h-[7px] w-[13px] text-[#e6e6e6]" />
        </div>
        <div className="-mr-[13px] ml-auto flex">
          <button aria-label="Asks only" className="grid size-[50px] place-items-center">
            <BookIcon kind="asks" />
          </button>
          <button aria-label="Bids only" className="grid size-[50px] place-items-center">
            <BookIcon kind="bids" />
          </button>
          <button aria-label="Full book" className="grid size-[50px] place-items-center rounded-full bg-[#1c1e21]">
            <BookIcon kind="both" />
          </button>
        </div>
      </div>
      <div className="min-h-0 flex-[1_1_78px]">
        <table className="h-full w-full table-fixed border-separate border-spacing-x-0 border-spacing-y-[2px]">
          <BookCols />
          <thead>
            <tr className="h-[76px] text-[18px] text-[#777b84]">
              <th className="pt-1 text-left font-normal">Price<br />(USDT)</th>
              <th className="pt-1 text-right font-normal">Amount<br />(BTC)</th>
              <th className="pt-1 text-right font-normal">Total</th>
            </tr>
          </thead>
          <BookRows rows={ASKS} side="ask" />
        </table>
      </div>
      <div className="flex h-[60px] shrink-0 items-center gap-[18px] border-t-2 border-[#1d1f23]">
        <strong className="text-[25px] font-semibold text-[#e04448]">110,340.0</strong>
        <span className="text-[22px]">110,350.9</span>
      </div>
      <div className="min-h-0 flex-1">
        <table className="h-full w-full table-fixed border-separate border-spacing-x-0 border-spacing-y-[2px]">
          <BookCols />
          <BookRows rows={BIDS} side="bid" />
        </table>
      </div>
    </section>
  );
}

/* ------------------------------------------------------------ right side */

function FieldBox({ label, value, unit, extra, menu }: { label: string; value?: string; unit: string; extra?: string; menu?: boolean }) {
  return (
    <label className={`mb-3 flex h-[62px] items-center rounded-xl bg-[#1a1b1f] pl-[27px] text-[22px] text-[#666a72] ${extra ? "pr-[26px]" : "pr-[34px]"}`}>
      {label}
      {menu && <ChevronDown className="ml-[15px] size-6" strokeWidth={3} />}
      <input defaultValue={value} className="w-0 min-w-0 flex-1 bg-transparent text-right text-[#e6e6e6] outline-none" />
      <span className="ml-[12px]">{unit}</span>
      {extra && <span className="ml-[6px] text-[18px] text-[#3b82e6]">{extra}</span>}
    </label>
  );
}

function OrderForm() {
  return (
    <section className="h-[1120px] shrink-0 rounded-xl bg-[#101114] px-[25px] pt-[18px] text-[18px] leading-[25px] text-[#e6e6e6]">
      <div className="flex items-center gap-3 text-[#6d717a]">
        <h2 className="mr-auto text-[22px] font-semibold text-[#e6e6e6]">Order Form</h2>
        <button aria-label="Guide" className="grid size-[50px] place-items-center rounded-full bg-[#1a1b1f]">
          <svg viewBox="0 0 24 22" className="h-[20px] w-[22px]" aria-hidden="true">
            <path d="M0 6l5-2v14l6 2-8 2z" fill="currentColor" />
            <rect x="7" y="0" width="17" height="19" rx="3" fill="currentColor" />
            <path d="M12 7a3 3 0 1 1 4 3v2M16 14v2" fill="none" stroke="#1a1b1f" strokeWidth="2" />
          </svg>
        </button>
        <button aria-label="Settings" className="grid size-[50px] place-items-center rounded-full bg-[#1a1b1f]">
          <svg viewBox="0 0 20 18" className="h-[18px] w-5" fill="currentColor" aria-hidden="true">
            <path d="M6 0h8l6 9-6 9H6L0 9z" />
            <circle cx="10" cy="9" r="3" fill="#1a1b1f" />
          </svg>
        </button>
      </div>
      <button className="mt-[25px] flex h-[50px] w-full items-center justify-center rounded-full bg-[#17181b] pl-[14px] text-[22px] font-medium">
        Cross
        <span className="mx-[13px] h-7 w-px bg-[#24262a]" />
        <span className="rounded-full bg-[#261f18] px-[12px] text-[19px] leading-[37px] font-normal text-[#c97420]">2x</span>
        <ChevronRight className="ml-[12px] size-7 text-[#85888e]" strokeWidth={2.5} />
      </button>
      <div className="mt-[25px] grid h-[50px] grid-cols-2 rounded-lg bg-[#17181b] p-[6px] px-[9px] font-medium">
        <button className="rounded-md bg-[#1b6de8]">Limit</button>
        <button>Market</button>
      </div>
      <div className="mt-[25px] flex h-[32px] items-center pr-[3px] text-[#777b84]">
        <Info />
        <span className="mr-auto ml-[11px]">AVAIL:</span>
        <span className="mr-[6px] font-medium text-[#e6e6e6]">9.91752567</span>
        USDT
        <span className="ml-1"><Swap /></span>
      </div>
      <div className="mt-[24px]">
        <FieldBox label="Price" value="110412.5" unit="USDT" extra="Last" />
        <FieldBox label="Amount" value="0.00011" unit="BTC" menu />
      </div>
      <div className="relative mx-[18px] mt-[18px] h-[92px] text-[#5a5e66]">
        <div className="flex justify-between">
          {["0%", "25%", "50%", "75%", "100%"].map((t) => (
            <span key={t} className="flex w-0 justify-center">{t}</span>
          ))}
        </div>
        <div className="-mx-[7px] mt-[13px] flex h-[13px] items-center justify-between rounded-full bg-[linear-gradient(to_right,#1d4f9e_62%,#1a1b1f_62%)]">
          {[0, 1, 2, 3, 4].map((k) => (
            <span key={k} className="size-[14px] rounded-full bg-[#2c3a52]" />
          ))}
        </div>
        <span className="absolute top-[26px] left-[62%] size-[37px] -translate-x-1/2 rounded-full bg-[#1b5fce]" />
        <input type="range" aria-label="Order size" defaultValue={62} className="absolute inset-x-0 top-[26px] h-[37px] w-full opacity-0" />
      </div>
      <dl className="grid h-[122px] grid-cols-[1fr_auto] content-center gap-y-[18px] rounded-xl border-2 border-[#222428] px-[25px] text-[#565a61]">
        <dt>Value</dt>
        <dd className="text-[#e6e6e6]">
          <span className="text-[#2f9c78]">12.14</span> / <span className="text-[#d94c50]">12.14</span>
          <span className="ml-[9px]">USDT</span>
        </dd>
        <dt>Cost</dt>
        <dd className="text-right text-[#e6e6e6]">
          <span className="text-[#2f9c78]">6.07</span> / <span className="text-[#d94c50]">6.07</span>
          <span className="ml-[9px]">USDT</span>
        </dd>
      </dl>
      <div className="mt-[42px] flex h-[31px] items-center pr-[3px] pl-[3px]">
        <label className="relative mr-auto flex items-center">
          <input type="checkbox" defaultChecked className="size-[31px] appearance-none rounded-md bg-[#1b5fce]" />
          <Check className="pointer-events-none absolute left-[5px] size-[21px] text-[#101114]" strokeWidth={4} />
          <span className="ml-[17px]">Take Profit / Stop Loss</span>
        </label>
        <span className="mr-[15px]">Advance</span>
        <Swap />
      </div>
      <div className="mt-[17px]">
        <FieldBox label="Take Profit" unit="USDT" />
        <FieldBox label="Stop Loss" unit="USDT" />
      </div>
      <div className="mt-[25px] grid grid-cols-2 gap-3 text-[22px] font-semibold">
        <button className="h-[62px] rounded-full bg-[#37906f]">Buy / Long</button>
        <button className="h-[62px] rounded-full bg-[#b9282c]">Sell / Short</button>
      </div>
    </section>
  );
}

function Row({ label, info, value, className }: { label: string; info?: boolean; value: string; className: string }) {
  return (
    <div className={`flex items-center text-[18px] leading-[25px] text-[#70747d] ${className}`}>
      <span className="mr-[17px]">{label}</span>
      {info && <Info />}
      <span className="mr-[7px] ml-auto font-medium text-[#e6e6e6]">{value}</span>
      USDT
    </div>
  );
}

function MarginPanel() {
  return (
    <section className="h-[216px] shrink-0 rounded-xl bg-[#101114] px-[25px] pt-[22px]">
      <h2 className="text-[22px] leading-[28px] font-semibold text-[#e6e6e6]">Margin Ratio</h2>
      <div className="mt-[12px] flex h-[48px] items-center text-[18px] text-[#70747d]">
        Margin Ratio
        <svg viewBox="0 0 32 30" className="mr-[17px] ml-auto h-[30px] w-8" fill="none" strokeWidth="2.5" aria-hidden="true">
          <path d="M8 28A14.5 14.5 0 0 1 3 10" stroke="#2f9c78" />
          <path d="M3 10A14.5 14.5 0 0 1 29 10" stroke="#d09330" />
          <path d="M29 10A14.5 14.5 0 0 1 23 28" stroke="#d94c50" />
          <path d="M11 22l7-5a2.5 2.5 0 1 0-3-2z" stroke="#c4c6cb" strokeWidth="1.5" />
        </svg>
        <span className="text-[25px] font-medium text-[#26906c]">0.00%</span>
      </div>
      <Row label="Margin Maintenance" value="0.0" className="mt-[13px]" />
      <Row label="Margin Balance" value="0" className="mt-[19px]" />
    </section>
  );
}

function AssetsPanel() {
  return (
    <section className="h-[336px] shrink-0 rounded-xl bg-[#101114] px-[25px] pt-[28px]">
      <div className="flex items-center justify-between">
        <h2 className="text-[22px] font-semibold text-[#e6e6e6]">Assets</h2>
        <div className="relative flex w-[150px] items-center">
          <select aria-label="Asset" className="h-[50px] w-full appearance-none rounded-xl bg-[#17181b] pl-[27px] text-[18px] text-[#e6e6e6]">
            <option>USDT</option>
          </select>
          <Caret className="pointer-events-none absolute right-[25px] h-[7px] w-[13px] text-[#e6e6e6]" />
        </div>
      </div>
      <Row label="Balance" info value="9.91752567" className="mt-[25px]" />
      <Row label="Futures Bonus" info value="0" className="mt-[25px]" />
      <Row label="Unrealized PnL" value="0.0" className="mt-[21px]" />
      <div className="mt-[26px] flex items-center">
        <div className="relative mr-[24px] flex flex-1 items-center">
          <select aria-label="Asset mode" className="h-[62px] w-full appearance-none rounded-xl border-2 border-[#24262a] pl-[25px] text-[22px] text-[#e6e6e6]">
            <option>Single Asset Mode</option>
          </select>
          <Caret className="pointer-events-none absolute right-[22px] h-[9px] w-[18px] text-[#e6e6e6]" />
        </div>
        <span className="pr-[2px]"><Info /></span>
      </div>
    </section>
  );
}

function TradesPanel() {
  return (
    <section className="flex min-h-0 flex-1 flex-col rounded-xl bg-[#101114] px-[25px] pt-[24px] pb-[6px] text-[19px] leading-[25px] text-[#979aa1]">
      <h2 className="text-[22px] leading-[28px] font-semibold text-[#e6e6e6]">Market Tradings</h2>
      <div className="mt-[18px] min-h-0 flex-1">
        <table className="h-full w-full table-fixed">
          <colgroup>
            <col className="w-[40%]" />
            <col className="w-[30%]" />
            <col />
          </colgroup>
          <thead>
            <tr className="h-[70px] text-[18px] text-[#777b84]">
              <th className="text-left font-normal">Price<br />(USDT)</th>
              <th className="text-right font-normal">Amount<br />(BTC)</th>
              <th className="text-right font-normal">Time</th>
            </tr>
          </thead>
          <tbody>
            {TRADES.map(([price, amount, time, up]) => (
              <tr key={time}>
                <td className={up ? "text-[#2f9c78]" : "text-[#d94c50]"}>{price}</td>
                <td className="text-right">{amount}</td>
                <td className="text-right">{time}</td>
              </tr>
            ))}
          </tbody>
        </table>
      </div>
    </section>
  );
}

/* ---------------------------------------------------------- orders panel */

function OrdersPanel() {
  return (
    <section className="flex h-[454px] shrink-0 flex-col rounded-xl bg-[#101114] text-[18px] leading-[25px] text-[#777b84]">
      <div role="tablist" className="flex gap-[20px] px-[17px] pt-[27px] text-[22px] leading-[28px]">
        <button role="tab">Positions (0)</button>
        <button role="tab" aria-selected="true" className="font-semibold text-[#2f74c8]">Open Orders (0)</button>
        <button role="tab">Position History</button>
        <button role="tab">Order History</button>
        <button role="tab">Funding</button>
      </div>
      <table className="mt-[14px] w-full table-fixed border-b border-[#1d1f23]">
        <thead>
          <tr className="h-[50px]">
            <th className="w-[351px] pl-[43px] text-left font-normal">Pair</th>
            <th className="w-[349px] pl-[43px] text-left font-normal">Time</th>
            <th className="w-[381px] pl-[43px] text-left font-normal">Order Types</th>
            <th className="w-[386px] text-right font-normal">Price</th>
            <th className="w-[379px] text-right font-normal">Amount</th>
            <th className="w-[664px] pl-[181px] text-left font-normal">Filled %</th>
            <th className="text-left font-normal">TP/SL</th>
            <th className="pr-[50px] text-right font-normal">Cancel All</th>
          </tr>
        </thead>
      </table>
      <div className="flex flex-1 flex-col items-center justify-center gap-[12px] pb-[6px] text-[22px]">
        <EmptyArt />
        No Data
      </div>
      <label className="flex items-center gap-4 pb-[3px] pl-[20px] text-[#c4c6cb]">
        <input type="checkbox" className="size-[31px] appearance-none rounded-md border-3 border-[#c4c6cb]" />
        Hide other pairs
      </label>
    </section>
  );
}

/* ----------------------------------------------------------------- modal */

function ModeCard({ id, label, checked, onPick }: { id: "cross" | "isolated"; label: string; checked: boolean; onPick: () => void }) {
  return (
    <label className={`relative flex h-[118px] items-center overflow-hidden rounded-2xl border-3 px-[25px] text-[22px] font-semibold ${checked ? "border-[#2a84f7] text-[#4a96f8]" : "border-[#2c2d32] text-[#dedfe1]"}`}>
      <input type="radio" name="mode" checked={checked} onChange={onPick} className="sr-only" />
      <span className={`mr-[25px] overflow-hidden rounded-xl ${checked ? "bg-[#384355]" : "bg-[#2c2d31]"}`}>
        <CoinArt variant={id} />
      </span>
      {label}
      {checked && (
        <svg viewBox="0 0 32 32" className="absolute right-0 bottom-0 size-8" aria-hidden="true">
          <path d="M32 0v32H0z" fill="#2a84f7" />
          <path d="M14 22l4 4h3l6-9" fill="none" stroke="#fff" strokeWidth="2" />
        </svg>
      )}
    </label>
  );
}

const STEPS = ["1x", "2x", "3x", "5x", "10x", "20x", "25x", "50x", "75x", "100x", "125x", "150x"];

function MarginModal() {
  const [mode, setMode] = useState<"cross" | "isolated">("isolated");
  const [step, setStep] = useState(1);
  const move = (to: number) => setStep(Math.max(0, Math.min(STEPS.length - 1, to)));
  const fill = (step / (STEPS.length - 1)) * 100;
  return (
    <div className="fixed inset-0 flex items-center justify-center bg-black/80 pb-[5px]">
      <div role="dialog" aria-modal="true" aria-labelledby="modal-title" className="w-[934px] max-w-full rounded-xl bg-[#1c1d21] text-[18px] leading-[25px] font-semibold text-[#dedfe1]">
        <div className="relative flex h-[87px] items-center justify-center border-b-2 border-[#27282d]">
          <button aria-label="Close" className="absolute left-[28px] text-[#7b808c]">
            <X className="size-8" strokeWidth={1.6} />
          </button>
          <h1 id="modal-title" className="text-[22px]">Margin Mode</h1>
        </div>
        <div className="px-[50px] pb-[75px]">
          <h2 className="pt-[48px] text-[22px] leading-[28px]">Mode</h2>
          <div className="mt-[24px] grid grid-cols-2 gap-3">
            <ModeCard id="cross" label="Cross" checked={mode === "cross"} onPick={() => setMode("cross")} />
            <ModeCard id="isolated" label="Isolated" checked={mode === "isolated"} onPick={() => setMode("isolated")} />
          </div>
          <p className="mt-[24px] text-[#6b707c]">Changing the margin mode will only impact to the selected pair.</p>
          <div className="mt-[12px] grid grid-cols-2 rounded-xl bg-[#25262a] py-[25px] text-[#6b707c]">
            <div className="border-r border-[#33343a] pr-[34px] pl-[25px]">
              <h3 className="text-[#dedfe1]">Cross Margin</h3>
              <p className="mt-[12px]">
                All positions across the identical margin asset share a common asset cross margin balance. If a liquidation occurs, your entire margin balance for the assets, as well as any outstanding positions associated with the asset, may be lost.
              </p>
            </div>
            <div className="pr-[34px] pl-[25px]">
              <h3 className="text-[#dedfe1]">Isolated Margin</h3>
              <p className="mt-[12px]">
                Under isolated margin, a specific amount of margin, i.e. initial margin, is applied to a position, and a position margin can be adjusted manually. In the event of a liquidation, you may lose the initial margin and extra margin which added to this position. Please note that adjusting the leverage will affect all positions and active orders under the current pair.
              </p>
            </div>
          </div>
          <h2 className="pt-[24px] text-[22px] leading-[28px]">Leverage</h2>
          <div className="mt-[23px] flex h-[62px] items-center justify-between rounded-xl bg-[#2d2e32] px-[42px] text-[22px] text-[#7b808c]">
            <button aria-label="Decrease leverage" onClick={() => move(step - 1)}>
              <Minus className="size-8" strokeWidth={1.6} />
            </button>
            <output className="font-medium text-[#dedfe1]">{STEPS[step]}</output>
            <button aria-label="Increase leverage" onClick={() => move(step + 1)}>
              <Plus className="size-8" strokeWidth={1.6} />
            </button>
          </div>
          <div className="relative mx-[19px] mt-[31px] h-[58px] font-normal text-[#50535b]">
            <div className="flex justify-between">
              {STEPS.map((t) => (
                <span key={t} className="flex w-0 justify-center">{t}</span>
              ))}
            </div>
            <div className="relative -mx-[7px] mt-[12px] h-[13px] rounded-full bg-[#2d2e32]">
              <div className="absolute inset-y-0 left-[7px] rounded-full bg-[#2a84f7]" style={{ width: `${fill}%` }} />
              <div className="relative flex h-full items-center justify-between">
                {STEPS.map((t, k) => (
                  <span key={t} className={`size-[14px] rounded-full ${k === 0 ? "bg-white/25" : "bg-[#4f5157]"}`} />
                ))}
              </div>
            </div>
            <span className="absolute top-[25px] size-[37px] -translate-x-1/2 rounded-full bg-[#1b6de8]" style={{ left: `${fill}%` }} />
            <input type="range" aria-label="Leverage" min={0} max={11} value={step} onChange={(e) => move(Number(e.target.value))} className="absolute inset-x-0 top-[25px] h-[37px] w-full opacity-0" />
          </div>
          <button className="mt-[48px] h-[62px] w-full rounded-xl bg-[#1b6de8] text-[22px] font-semibold text-white">Confirm</button>
        </div>
      </div>
    </div>
  );
}

/* ------------------------------------------------------------------ page */

export default function App() {
  return (
    <div className="flex h-screen flex-col bg-black font-['Inter',sans-serif]">
      <Header />
      <main className="flex min-h-0 flex-1 gap-[6px] pt-[6px] pb-[5px]">
        <div className="flex min-w-0 flex-1 flex-col gap-[7px]">
          <div className="flex min-h-0 flex-1 gap-[7px]">
            <ChartPanel />
            <OrderBook />
          </div>
          <OrdersPanel />
        </div>
        <aside className="flex w-[498px] shrink-0 flex-col gap-[7px]">
          <OrderForm />
          <MarginPanel />
          <AssetsPanel />
          <TradesPanel />
        </aside>
      </main>
      <footer className="flex h-[53px] shrink-0 items-center border-t-2 border-[#1d1f23] bg-[#131417] pt-[3px] pr-[18px] pl-[17px] text-[22px] text-[#e6e6e6]">
        <span className="mr-auto flex items-center gap-[13px] text-[18px] text-[#26906c]">
          <Wifi className="size-7" strokeWidth={2.5} />
          Stable connection
        </span>
        <a href="#help">Help &amp; Support</a>
        <a href="#download" className="ml-[49px]">Download App</a>
      </footer>
      <MarginModal />
      <button aria-label="Chat with support" className="fixed right-[19px] bottom-[8px] grid size-[75px] place-items-center rounded-full bg-[#1b6de8] text-white">
        <svg viewBox="0 0 32 32" className="size-8" fill="none" stroke="currentColor" strokeWidth="3" aria-hidden="true">
          <path d="M1.5 27V16a14.5 14 0 0 1 29 0v14.500H17" />
          <rect x="2" y="20" width="6" height="10" rx="3" fill="currentColor" />
          <rect x="24" y="20" width="6" height="9" rx="3" fill="currentColor" />
        </svg>
      </button>
    </div>
  );
}
